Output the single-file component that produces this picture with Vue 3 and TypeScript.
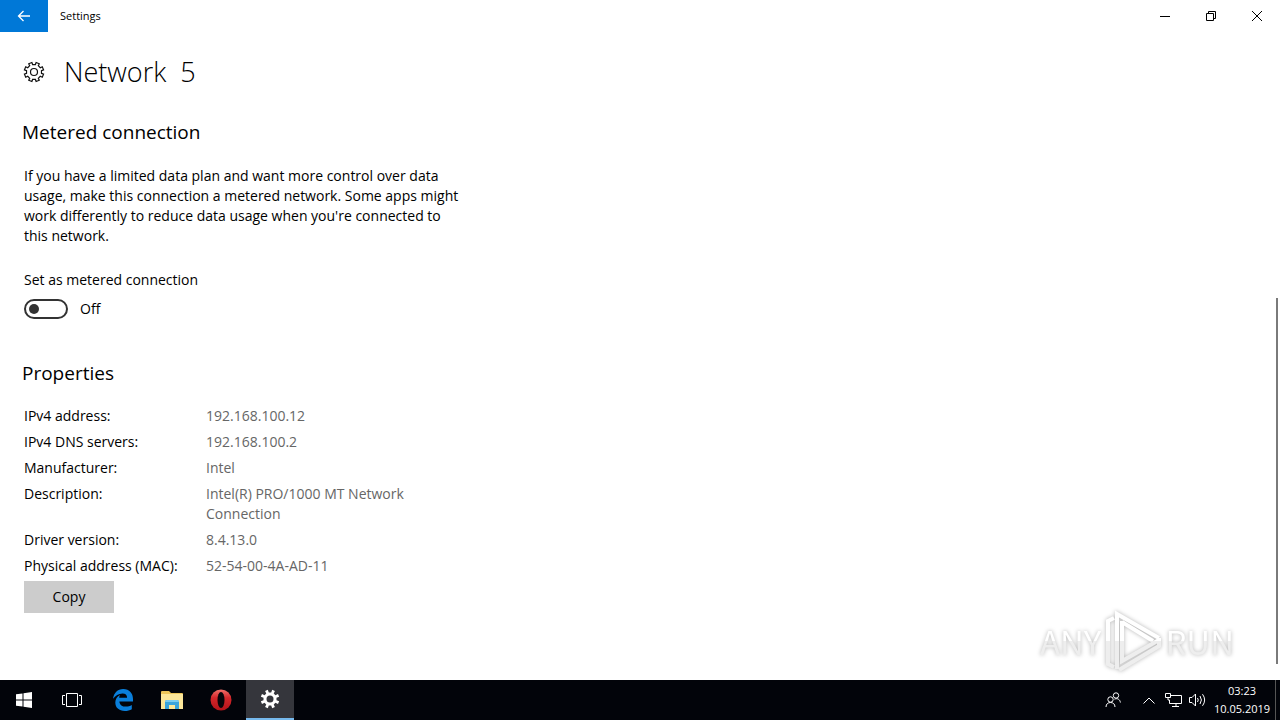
<script setup lang="ts">
import { ref } from 'vue'

interface Property {
  label: string
  value: string
}

const metered = ref(false)

const properties: Property[] = [
  { label: 'IPv4 address:', value: '192.168.100.12' },
  { label: 'IPv4 DNS servers:', value: '192.168.100.2' },
  { label: 'Manufacturer:', value: 'Intel' },
  { label: 'Description:', value: 'Intel(R) PRO/1000 MT Network Connection' },
  { label: 'Driver version:', value: '8.4.13.0' },
  { label: 'Physical address (MAC):', value: '52-54-00-4A-AD-11' },
]

// Closed outline of an eight-toothed gear centred on the origin.
function gear(outer: number, inner: number, tip: number, root: number, turn: number): string {
  const points: string[] = []
  for (let i = 0; i < 8; i++) {
    const mid = i * 45 + turn
    const corners: [number, number][] = [[inner, -root], [outer, -tip], [outer, tip], [inner, root]]
    for (const [r, offset] of corners) {
      const a = ((mid + offset) * Math.PI) / 180
      points.push(`${(r * Math.cos(a)).toFixed(2)} ${(r * Math.sin(a)).toFixed(2)}`)
    }
  }
  return `M${points.join('L')}Z`
}

const headerGear = gear(9.8, 7.6, 10, 12, 22.5)
const taskGear = gear(9.4, 6.6, 9, 12, 22.5)
</script>

<template>
  <div class="window">
    <header class="titlebar">
      <button class="back" aria-label="Back">
        <svg width="14" height="12" viewBox="0 0 14 12"><path d="M13 6H1.5M6.5 1L1.5 6L6.5 11" /></svg>
      </button>
      <span class="app-name">Settings</span>
      <button class="caption" aria-label="Minimize">
        <svg width="10" height="10" viewBox="0 0 10 10"><path d="M0 5.5H10" /></svg>
      </button>
      <button class="caption" aria-label="Restore">
        <svg width="10" height="10" viewBox="0 0 10 10"><path d="M.5 2.5H7.5V9.5H.5ZM2.500 2.500V.5H9.500V7.500H7.500" /></svg>
      </button>
      <button class="caption" aria-label="Close">
        <svg width="10" height="10" viewBox="0 0 10 10"><path d="M0 0L10 10M10 0L0 10" /></svg>
      </button>
    </header>

    <main class="content">
      <div class="page-title">
        <svg width="22" height="22" viewBox="-11 -11 22 22">
          <path :d="headerGear" />
          <circle r="3.500" />
        </svg>
        <h1>Network&nbsp; 5</h1>
      </div>

      <section>
        <h2>Metered connection</h2>
        <p class="blurb">If you have a limited data plan and want more control over data usage, make this connection a metered network. Some apps might work differently to reduce data usage when you're connected to this network.</p>
        <label class="switch-label" for="metered">Set as metered connection</label>
        <div class="switch-row">
          <input id="metered" v-model="metered" class="switch" type="checkbox" role="switch" />
          <span>{{ metered ? 'On' : 'Off' }}</span>
        </div>
      </section>

      <section>
        <h2 class="properties-title">Properties</h2>
        <table>
          <tbody>
            <tr v-for="item in properties" :key="item.label">
              <th scope="row">{{ item.label }}</th>
              <td>{{ item.value }}</td>
            </tr>
          </tbody>
        </table>
        <button class="copy">Copy</button>
      </section>

      <div class="scroll-thumb"></div>
      <div class="watermark">
        <span>ANY</span>
        <svg width="60" height="64" viewBox="0 0 60 64">
          <defs>
            <linearGradient id="mark" x1="0" y1="0" x2="0" y2="64" gradientUnits="userSpaceOnUse">
              <stop offset=".5" stop-color="#fff" />
              <stop offset=".5" stop-color="#eee" />
            </linearGradient>
          </defs>
          <path d="M11 9L5 12V55L11 58M14 60V5L56 29M19 12V52L56 31M19 13L50 32M16 61L56 37V29" />
        </svg>
        <span>RUN</span>
      </div>
    </main>

    <footer class="taskbar">
      <div class="system">
        <button class="task" aria-label="Start">
          <svg width="16" height="16" viewBox="0 0 16 16"><path fill="#fff" d="M0 2.300L6.500 1.400V7.500H0ZM7.500 1.200L16 0V7.500H7.500ZM0 8.500H6.500V14.600L0 13.700ZM7.500 8.500H16V16L7.500 14.800Z" /></svg>
        </button>
        <button class="task" aria-label="Task View">
          <svg width="20" height="14" viewBox="0 0 20 14"><path class="line" d="M4.500 .5H15.500V13.500H4.500ZM3 2.500H.5V11.500H3M17 2.500H19.500V11.500H17" /></svg>
        </button>
      </div>
      <div class="apps">
        <button class="task" aria-label="Microsoft Edge">
          <svg width="20" height="22" viewBox="0 0 20 22"><path fill="#0a7fdb" d="M0 9.700C.8 4 4.500 0 10.200 0C16.500 0 20 4.500 20 10V12.400H6.400C6.600 16 9.500 17.600 12.700 17.600C15.100 17.600 17.100 17 18.800 15.900V20.200C16.900 21.400 14.500 22 11.800 22C6 22 2.300 18.700 2.300 13.600C2.300 10.300 4.100 7.600 7.100 6.100C6.500 6.900 6.200 7.800 6.200 8.700H14.100C14.100 5.900 12.600 4.400 9.400 4.400C5.600 4.400 2.400 6.600 0 9.700Z" /></svg>
        </button>
        <button class="task" aria-label="File Explorer">
          <svg width="22" height="18" viewBox="0 0 22 18">
            <path fill="#edc65a" d="M0 1Q0 0 1 0H8L10 2H21Q22 2 22 3V17H0Z" />
            <path fill="#fce79a" d="M0 3H10L12 3H22V18H0Z" />
            <path fill="#3aa5dc" d="M4 18V11Q4 9 6 9H16Q18 9 18 11V18H14V14H8V18Z" />
            <path fill="#79cdf1" d="M6 9H16Q18 9 18 11H4Q4 9 6 9Z" />
          </svg>
        </button>
        <button class="task" aria-label="Opera">
          <svg width="22" height="22" viewBox="0 0 22 22">
            <defs>
              <linearGradient id="opera" x1="0" y1="0" x2="0" y2="1">
                <stop offset="0" stop-color="#f2706a" />
                <stop offset=".4" stop-color="#d3262a" />
                <stop offset="1" stop-color="#b3141a" />
              </linearGradient>
            </defs>
            <ellipse cx="11" cy="11" rx="10.500" ry="10.500" fill="url(#opera)" />
            <ellipse cx="11" cy="11" rx="3.500" ry="8" fill="#08050a" />
          </svg>
        </button>
        <button class="task active" aria-label="Settings">
          <svg width="20" height="20" viewBox="-10 -10 20 20">
            <path fill="#fff" :d="taskGear" />
            <circle r="3.500" fill="#35363c" />
          </svg>
        </button>
      </div>

      <div class="tray">
        <button class="tray-icon people" aria-label="People">
          <svg width="16" height="16" viewBox="0 0 16 16"><circle class="line" cx="5.500" cy="7.500" r="2.700" /><path class="line" d="M1 15C1 12 3 10.500 5.500 10.500S10 12 10 15" /><circle class="line" cx="11" cy="3.500" r="2.700" /><path class="line" d="M9.500 7.200C12.500 5.800 15 7.500 15.400 10.500" /></svg>
        </button>
        <button class="tray-icon" aria-label="Show hidden icons">
          <svg width="12" height="7" viewBox="0 0 12 7"><path class="line" d="M.5 6.500L6 1L11.500 6.500" /></svg>
        </button>
        <button class="tray-icon" aria-label="Network">
          <svg width="17" height="14" viewBox="0 0 17 14"><path class="line" d="M6 2.500H16.500V10.500H4.500V7M11 10.500V13.500M7 13.500H14M.5 .5H5.500V4.500H.5ZM3 4.500V7H4.500" /></svg>
        </button>
        <button class="tray-icon" aria-label="Volume">
          <svg width="17" height="14" viewBox="0 0 17 14"><path class="line" d="M.5 4.500H3L6.500 1V13L3 9.500H.5ZM8.500 5Q10 7 8.500 9M11 3Q13.800 7 11 11M13.500 1.200Q17.800 7 13.500 12.800" /></svg>
        </button>
        <div class="clock"><span>03:23</span><span>10.05.2019</span></div>
        <button class="show-desktop" aria-label="Show desktop"></button>
      </div>
    </footer>
  </div>
</template>

<style>
body {
  margin: 0;
}
</style>

<style scoped>
.window {
  display: flex;
  flex-direction: column;
  min-height: 100vh;
  background: #fff;
  color: #000;
  font: 14px/20px "Open Sans", "Noto Sans", sans-serif;
}

button {
  display: flex;
  align-items: center;
  justify-content: center;
  padding: 0;
  border: 0;
  background: none;
  color: inherit;
  font: inherit;
}

.titlebar {
  display: flex;
  height: 32px;
}

.back {
  width: 48px;
  background: #0078d7;
}

.back path {
  fill: none;
  stroke: #fff;
  stroke-width: 1.3;
}

.app-name {
  flex: 1;
  padding-left: 12px;
  font-size: 11px;
  line-height: 32px;
}

.caption {
  width: 46px;
}

.caption path {
  fill: none;
  stroke: #000;
}

.content {
  position: relative;
  flex: 1;
  padding: 20px 24px 24px;
}

.page-title {
  display: flex;
  align-items: center;
  gap: 19px;
  height: 40px;
}

.page-title svg {
  margin-left: -1px;
  fill: none;
  stroke: #111;
  stroke-width: 1.2;
}

h1 {
  margin: 0;
  font-size: 27px;
  font-weight: 300;
  line-height: 40px;
}

h2 {
  margin: 26px 0 0 -2px;
  font-size: 19px;
  font-weight: 400;
  line-height: 28px;
}

.blurb {
  width: 442px;
  margin: 20px 0 24px;
}

.switch-label {
  display: block;
}

.switch-row {
  display: flex;
  align-items: center;
  gap: 12px;
  height: 20px;
  margin-top: 9px;
}

.switch {
  appearance: none;
  display: flex;
  align-items: center;
  box-sizing: border-box;
  width: 44px;
  height: 20px;
  margin: 0;
  padding: 0 3px;
  border: 2px solid #333;
  border-radius: 10px;
}

.switch::before {
  content: "";
  width: 10px;
  height: 10px;
  border-radius: 50%;
  background: #333;
}

.switch:checked {
  justify-content: flex-end;
}

.properties-title {
  margin-top: 40px;
}

table {
  margin-top: 16px;
  border-collapse: collapse;
}

th,
td {
  padding: 3px 0;
  font-weight: 400;
  text-align: left;
  vertical-align: top;
}

th {
  width: 182px;
}

td {
  width: 216px;
  color: #666;
}

.copy {
  width: 90px;
  height: 32px;
  margin-top: 2px;
  background: #ccc;
}

.scroll-thumb {
  position: absolute;
  right: 2px;
  bottom: 16px;
  width: 2px;
  height: 366px;
  background: #7a7a7a;
}

.watermark {
  position: absolute;
  right: 46px;
  bottom: 7px;
  display: flex;
  align-items: center;
  gap: 2px;
  font: 33px/64px "Noto Sans CJK SC", "Liberation Sans", sans-serif;
  filter: drop-shadow(0 0 2px #b4b4b4);
}

.watermark span {
  background: linear-gradient(#fff 50%, #eee 50%);
  background-clip: text;
  color: transparent;
}

.watermark path {
  fill: none;
  stroke: url(#mark);
  stroke-width: 4;
}

.taskbar {
  display: flex;
  height: 40px;
  background: #02040a;
  color: #fff;
}

.system,
.apps {
  display: flex;
}

.apps {
  gap: 1px;
  margin-left: 3px;
}

.task {
  width: 48px;
}

.active {
  border-bottom: 2px solid #76b9ed;
  background: #35363c;
}

.line {
  fill: none;
  stroke: #fff;
}

.tray {
  display: flex;
  margin-left: auto;
}

.tray-icon {
  width: 24px;
}

.people {
  margin-right: 12px;
}

.clock {
  display: flex;
  flex-direction: column;
  align-items: center;
  width: 66px;
  padding-top: 2px;
  font-size: 11px;
  line-height: 18px;
}

.show-desktop {
  width: 5px;
  border-left: 1px solid #555;
}
</style>
